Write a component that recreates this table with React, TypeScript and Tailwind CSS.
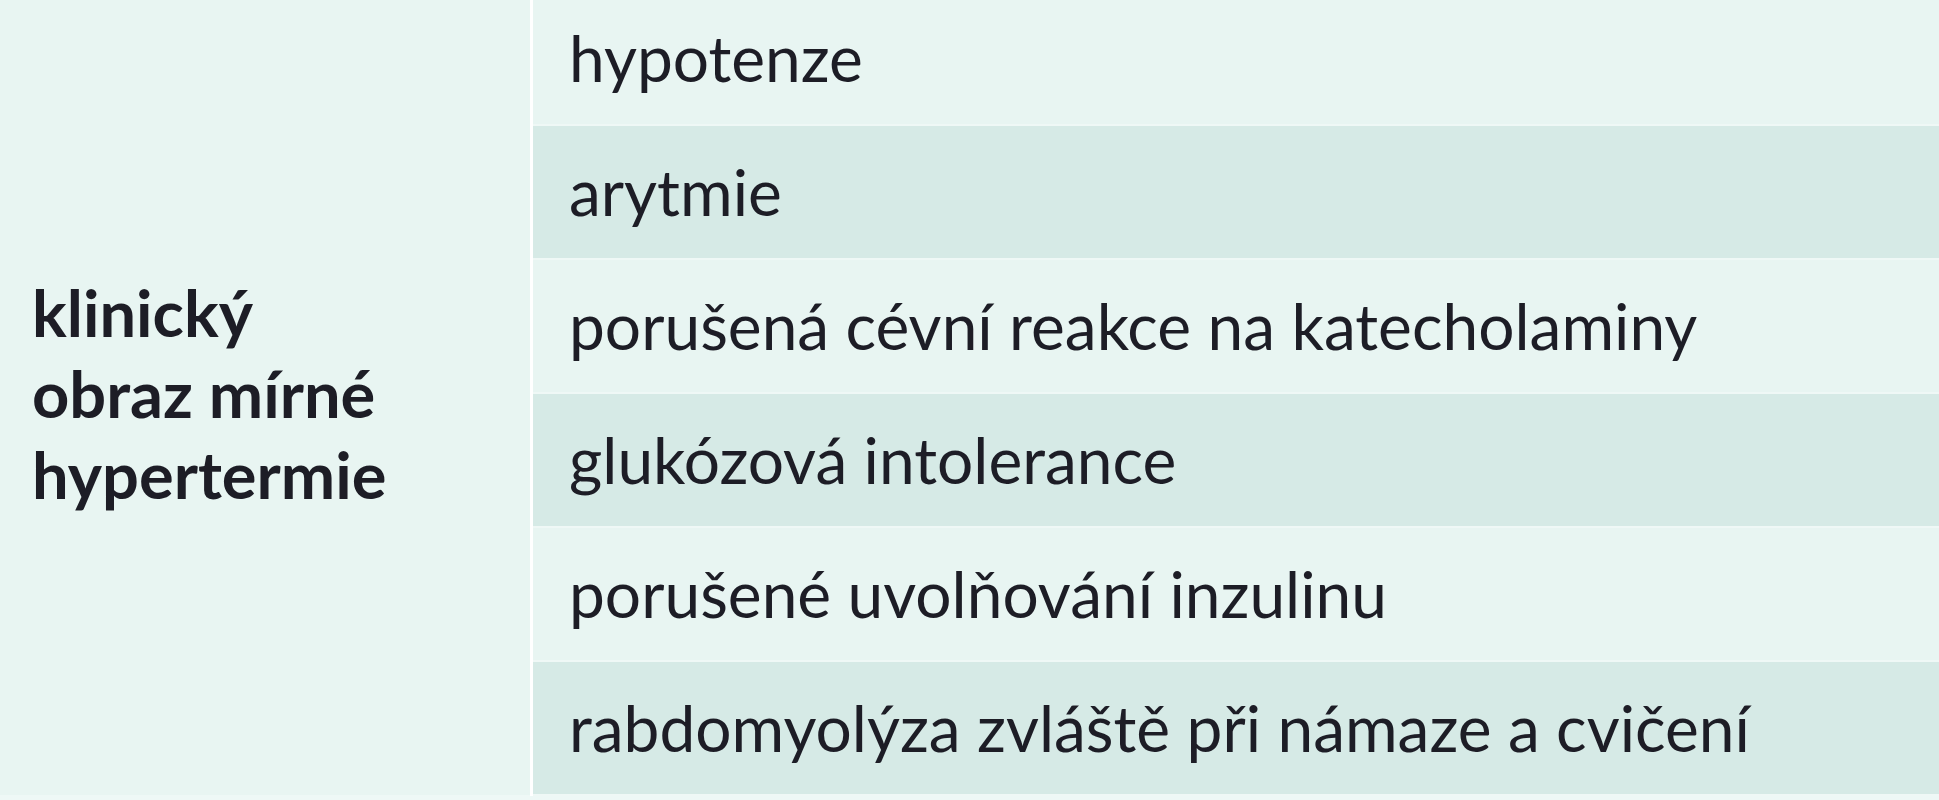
const rows = [
  'hypotenze',
  'arytmie',
  'porušená cévní reakce na katecholaminy',
  'glukózová intolerance',
  'porušené uvolňování inzulinu',
  'rabdomyolýza zvláště při námaze a cvičení',
]

export default function App() {
  return (
    <div className="h-[800px] w-[1939px] overflow-hidden bg-[#eef8f6] text-[#1d1d26] [font-family:Lato,'Noto_Sans',sans-serif]">
      <div className="-mt-[8px] flex h-[804px]">
        {/* label column */}
        <div className="flex h-[803px] w-[530px] shrink-0 items-center bg-[#e8f5f2] pl-[32px]">
          <p className="text-[65px] font-bold leading-[81px]">
            klinický
            <br />
            obraz mírné
            <br />
            hypertermie
          </p>
        </div>
        <div className="w-[3px] shrink-0 bg-white" />

        {/* symptoms */}
        <div className="flex flex-1 flex-col">
          {rows.map((row, i) => (
            <div
              key={row}
              className={
                i % 2 === 0
                  ? 'flex h-[134px] items-center border-b-2 border-[#eff8f6] bg-[#e8f5f2] pl-[36px]'
                  : 'flex h-[134px] items-center border-b-2 border-[#eff8f6] bg-[#d6eae6] pl-[36px]'
              }
            >
              <span className="text-[64px] leading-none">{row}</span>
            </div>
          ))}
        </div>
      </div>
    </div>
  )
}
